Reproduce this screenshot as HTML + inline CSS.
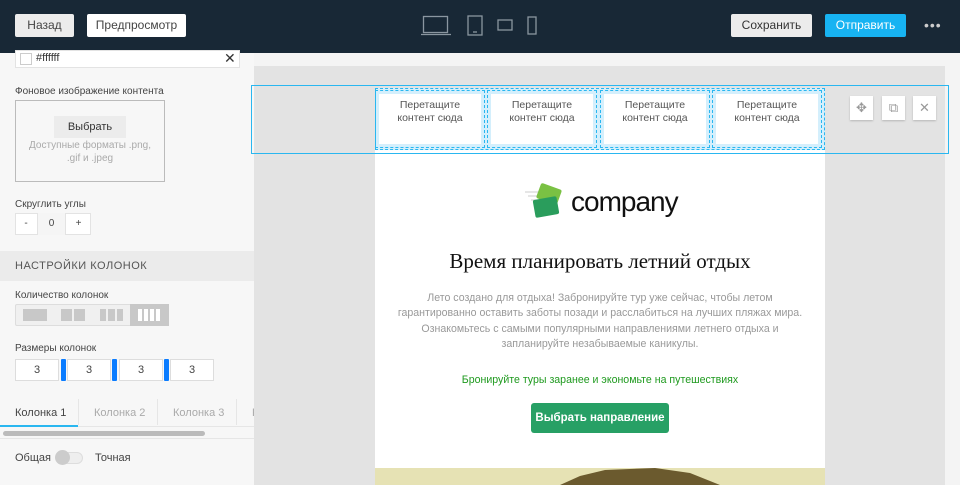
<!DOCTYPE html>
<html><head><meta charset="utf-8"><style>
*{box-sizing:border-box;margin:0;padding:0}
body{width:960px;height:485px;overflow:hidden;font-family:"Liberation Sans",sans-serif;background:#f4f4f4;position:relative;font-size:11px;color:#444;line-height:1.2}
.a{position:absolute;white-space:nowrap}
.hdr{left:0;top:0;width:960px;height:53px;background:#182836}
.btn{position:absolute;height:23px;border-radius:2px;font-size:12px;text-align:center;line-height:23px}
.lp{left:0;top:53px;width:254px;height:432px;background:#f7f7f7}
.lbl{font-size:10px;color:#444}
.cell{position:absolute;top:91px;width:108px;height:56px;background:#fff;border:3px solid #d4effc;outline:1px dashed #2ab7f0;text-align:center;font-size:10.5px;color:#555;padding-top:5px;line-height:13px}
.ib{position:absolute;top:96px;width:23px;height:24px;background:#fff;box-shadow:0 1px 2px rgba(0,0,0,.2);color:#999;text-align:center;line-height:24px;font-size:13px}
.num{position:absolute;top:359px;width:44px;height:22px;background:#fff;border:1px solid #ddd;text-align:center;line-height:20px;font-size:11px}
.bar{position:absolute;top:359px;width:5px;height:22px;background:#0a7cff;border-radius:1px}
</style></head><body>
<div class="a hdr"></div>
<div class="btn" style="left:15px;top:14px;width:59px;background:#ececec;color:#444">Назад</div>
<div class="btn" style="left:87px;top:14px;width:99px;background:#fff;color:#444">Предпросмотр</div>
<svg class="a" style="left:420px;top:14px" width="125" height="24" fill="none" stroke="#8a96a0" stroke-width="1.3">
<rect x="3.5" y="2.5" width="24" height="16"/><path d="M1 20.5h30"/>
<rect x="48" y="2" width="14" height="19"/><path d="M53 18h4"/>
<rect x="78" y="6" width="14" height="10"/>
<rect x="108" y="3" width="8" height="17"/>
</svg>
<div class="btn" style="left:731px;top:14px;width:81px;background:#ececec;color:#333">Сохранить</div>
<div class="btn" style="left:825px;top:14px;width:81px;background:#17b3f2;color:#fff">Отправить</div>
<div class="a" style="left:924px;top:17px;color:#ccc;font-size:14px;letter-spacing:1px">•••</div>

<div class="a lp"></div>
<div class="a" style="left:15px;top:50px;width:225px;height:18px;background:#fff;border:1px solid #e3e3e3"></div>
<div class="a" style="left:20px;top:53px;width:12px;height:12px;border:1px solid #ccc;background:#fff"></div>
<div class="a" style="left:36px;top:52px;font-size:11px;color:#333">#ffffff</div>
<div class="a" style="left:224px;top:50px;font-size:14px;color:#333">✕</div>
<div class="a lbl" style="left:15px;top:86px">Фоновое изображение контента</div>
<div class="a" style="left:15px;top:100px;width:150px;height:82px;border:1px solid #bbb;background:#f7f7f7"></div>
<div class="a" style="left:54px;top:116px;width:72px;height:22px;background:#ececec;text-align:center;line-height:22px;font-size:11px;color:#333">Выбрать</div>
<div class="a" style="left:15px;top:139px;width:150px;text-align:center;font-size:10px;color:#aaa;line-height:13px">Доступные форматы .png,<br>.gif и .jpeg</div>
<div class="a lbl" style="left:15px;top:199px">Скруглить углы</div>
<div class="a" style="left:15px;top:213px;width:76px;height:22px;background:#fff;border:1px solid #e3e3e3"></div>
<div class="a" style="left:15px;top:213px;width:22px;text-align:center;font-size:10px;line-height:22px">-</div>
<div class="a" style="left:37px;top:213px;width:29px;height:22px;background:#f5f5f5;border-left:1px solid #e3e3e3;border-right:1px solid #e3e3e3;text-align:center;line-height:22px;font-size:10px">0</div>
<div class="a" style="left:66px;top:213px;width:25px;text-align:center;font-size:10px;line-height:22px">+</div>
<div class="a" style="left:0;top:251px;width:254px;height:30px;background:#ebebeb;font-size:11px;color:#555;letter-spacing:.5px;padding:9px 15px">НАСТРОЙКИ КОЛОНОК</div>
<div class="a lbl" style="left:15px;top:290px">Количество колонок</div>
<div class="a" style="left:15px;top:304px;width:154px;height:22px;background:#f0f0f0;border:1px solid #ddd;border-radius:2px"></div>
<div class="a" style="left:23px;top:309px;width:24px;height:12px;background:#c8c8c8"></div>
<div class="a" style="left:61px;top:309px;width:11px;height:12px;background:#c8c8c8"></div><div class="a" style="left:74px;top:309px;width:11px;height:12px;background:#c8c8c8"></div>
<div class="a" style="left:100px;top:309px;width:6px;height:12px;background:#c8c8c8"></div><div class="a" style="left:108px;top:309px;width:7px;height:12px;background:#c8c8c8"></div><div class="a" style="left:117px;top:309px;width:6px;height:12px;background:#c8c8c8"></div>
<div class="a" style="left:130px;top:304px;width:39px;height:22px;background:#c8c8c8"></div>
<div class="a" style="left:138px;top:309px;width:4px;height:12px;background:#fff"></div><div class="a" style="left:144px;top:309px;width:4px;height:12px;background:#fff"></div><div class="a" style="left:150px;top:309px;width:4px;height:12px;background:#fff"></div><div class="a" style="left:156px;top:309px;width:4px;height:12px;background:#fff"></div>
<div class="a lbl" style="left:15px;top:343px">Размеры колонок</div>
<div class="num" style="left:15px">3</div><div class="bar" style="left:61px"></div>
<div class="num" style="left:67px">3</div><div class="bar" style="left:112px"></div>
<div class="num" style="left:119px">3</div><div class="bar" style="left:164px"></div>
<div class="num" style="left:170px">3</div>
<div class="a" style="left:0;top:399px;width:254px;height:28px;border-bottom:1px solid #e6e6e6"></div>
<div class="a" style="left:15px;top:407px;font-size:11px;color:#444">Колонка 1</div>
<div class="a" style="left:0;top:425px;width:78px;height:2px;background:#2ab7f0"></div>
<div class="a" style="left:78px;top:399px;width:1px;height:26px;background:#e6e6e6"></div>
<div class="a" style="left:94px;top:407px;font-size:11px;color:#aaa">Колонка 2</div>
<div class="a" style="left:157px;top:399px;width:1px;height:26px;background:#e6e6e6"></div>
<div class="a" style="left:173px;top:407px;font-size:11px;color:#aaa">Колонка 3</div>
<div class="a" style="left:236px;top:399px;width:1px;height:26px;background:#e6e6e6"></div>
<div class="a" style="left:252px;top:407px;font-size:11px;color:#aaa">К</div>
<div class="a" style="left:3px;top:431px;width:202px;height:5px;background:#bbb;border-radius:3px"></div>
<div class="a" style="left:0;top:438px;width:254px;height:1px;background:#e6e6e6"></div>
<div class="a" style="left:15px;top:452px;font-size:11px;color:#444">Общая</div>
<div class="a" style="left:56px;top:452px;width:27px;height:12px;border-radius:6px;background:#eee;border:1px solid #ddd"></div>
<div class="a" style="left:55px;top:450px;width:15px;height:15px;border-radius:50%;background:#ccc"></div>
<div class="a" style="left:95px;top:452px;font-size:11px;color:#444">Точная</div>

<div class="a" style="left:254px;top:66px;width:691px;height:419px;background:#e3e3e3"></div>
<div class="a" style="left:375px;top:150px;width:450px;height:335px;background:#fff"></div>
<div class="a" style="left:251px;top:85px;width:698px;height:69px;border:1px solid #2ab7f0"></div>
<div class="a" style="left:375px;top:88px;width:450px;height:62px;border:1px dashed #2ab7f0;background:#d4effc"></div>
<div class="cell" style="left:376px">Перетащите<br>контент сюда</div>
<div class="cell" style="left:488px">Перетащите<br>контент сюда</div>
<div class="cell" style="left:601px">Перетащите<br>контент сюда</div>
<div class="cell" style="left:713px">Перетащите<br>контент сюда</div>
<div class="ib" style="left:850px">✥</div>
<div class="ib" style="left:882px">⧉</div>
<div class="ib" style="left:913px">✕</div>

<svg class="a" style="left:522px;top:180px" width="50" height="42">
<path d="M3 12h14M6 16h10M9 20h8" stroke="#ccc" stroke-width="1"/>
<rect x="16" y="6" width="22" height="16" rx="2" fill="#7ac143" transform="rotate(20 27 14)"/>
<rect x="12" y="18" width="24" height="18" rx="2" fill="#2a9d5c" transform="rotate(-10 24 27)"/>
</svg>
<div class="a" style="left:571px;top:185px;font-size:28px;color:#111;letter-spacing:-1px">company</div>
<div class="a" style="left:375px;top:249px;width:450px;text-align:center;font-family:'Liberation Serif',serif;font-size:21px;color:#111">Время планировать летний отдых</div>
<div class="a" style="left:375px;top:291px;width:450px;text-align:center;font-size:10.6px;color:#999;line-height:15.3px">Лето создано для отдыха! Забронируйте тур уже сейчас, чтобы летом<br>гарантированно оставить заботы позади и расслабиться на лучших пляжах мира.<br>Ознакомьтесь с самыми популярными направлениями летнего отдыха и<br>запланируйте незабываемые каникулы.</div>
<div class="a" style="left:375px;top:374px;width:450px;text-align:center;font-size:10.6px;color:#1f9a1f">Бронируйте туры заранее и экономьте на путешествиях</div>
<div class="a" style="left:531px;top:403px;width:138px;height:30px;background:#27a065;border-radius:3px;color:#fff;font-weight:bold;font-size:11.5px;text-align:center;line-height:30px">Выбрать направление</div>
<div class="a" style="left:375px;top:468px;width:450px;height:17px;background:#e6e2b4"></div>
<svg class="a" style="left:560px;top:468px" width="170" height="17"><path d="M0 17 L20 8 L45 2 L95 0 L130 5 L160 17Z" fill="#6b5a2e"/></svg>
</body></html>
